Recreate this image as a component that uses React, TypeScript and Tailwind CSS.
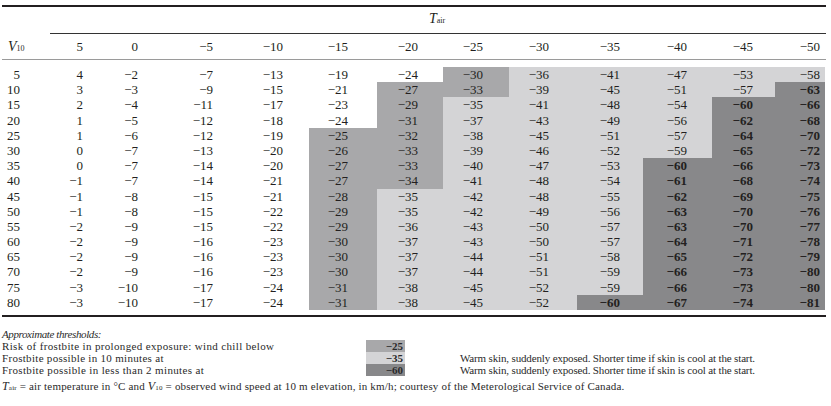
import React from "react";

const temps = [5, 0, -5, -10, -15, -20, -25, -30, -35, -40, -45, -50];

const data: [number, number[]][] = [
  [5, [4, -2, -7, -13, -19, -24, -30, -36, -41, -47, -53, -58]],
  [10, [3, -3, -9, -15, -21, -27, -33, -39, -45, -51, -57, -63]],
  [15, [2, -4, -11, -17, -23, -29, -35, -41, -48, -54, -60, -66]],
  [20, [1, -5, -12, -18, -24, -31, -37, -43, -49, -56, -62, -68]],
  [25, [1, -6, -12, -19, -25, -32, -38, -45, -51, -57, -64, -70]],
  [30, [0, -7, -13, -20, -26, -33, -39, -46, -52, -59, -65, -72]],
  [35, [0, -7, -14, -20, -27, -33, -40, -47, -53, -60, -66, -73]],
  [40, [-1, -7, -14, -21, -27, -34, -41, -48, -54, -61, -68, -74]],
  [45, [-1, -8, -15, -21, -28, -35, -42, -48, -55, -62, -69, -75]],
  [50, [-1, -8, -15, -22, -29, -35, -42, -49, -56, -63, -70, -76]],
  [55, [-2, -9, -15, -22, -29, -36, -43, -50, -57, -63, -70, -77]],
  [60, [-2, -9, -16, -23, -30, -37, -43, -50, -57, -64, -71, -78]],
  [65, [-2, -9, -16, -23, -30, -37, -44, -51, -58, -65, -72, -79]],
  [70, [-2, -9, -16, -23, -30, -37, -44, -51, -59, -66, -73, -80]],
  [75, [-3, -10, -17, -24, -31, -38, -45, -52, -59, -66, -73, -80]],
  [80, [-3, -10, -17, -24, -31, -38, -45, -52, -60, -67, -74, -81]],
];

// column widths + right padding, one per temperature column
const colCls = [
  "w-[57px] pr-[24px]",
  "w-[55px] pr-[24px]",
  "w-[78px] pr-[27px]",
  "w-[69px] pr-[26px]",
  "w-[68px] pr-[29px]",
  "w-[66px] pr-[25px]",
  "w-[66px] pr-[26px]",
  "w-[68px] pr-[28px]",
  "w-[66px] pr-[23px]",
  "w-[69px] pr-[25px]",
  "w-[63px] pr-[22px]",
  "w-[50px] pr-[5px]",
];

const fmt = (n: number) => (n < 0 ? "\u2212" + Math.abs(n) : String(n));

function shade(v: number) {
  if (v <= -60) return "bg-[#88888a] font-bold";
  if (v <= -35) return "bg-[#d4d4d6]";
  if (v <= -25) return "bg-[#a8a8aa]";
  return "";
}

export default function App() {
  return (
    <div className="w-[831px] h-[406px] bg-white text-[#231f20] font-['Liberation_Serif',serif]">
      <div className="ml-[2px] w-[824px] pt-[5px]">
        <div className="border-t-2 border-[#231f20]" />

        {/* T air header */}
        <div className="flex h-[27px] items-end">
          <div className="w-[48px]" />
          <div className="flex-1 border-b border-[#333] pb-[5px] pl-[379px] text-[14px] leading-[14px]">
            <i>T</i>
            <span className="text-[8px]">air</span>
          </div>
        </div>

        {/* column headings */}
        <div className="flex h-[26px] items-center text-[13px] border-b-[1.5px] border-[#9a9a9a]">
          <div className="w-[48px] pl-[6px]">
            <i className="text-[14px]">V</i>
            <span className="text-[8px]">10</span>
          </div>
          {temps.map((t, i) => (
            <div key={t} className={`${colCls[i]} text-right`}>
              {fmt(t)}
            </div>
          ))}
        </div>

        {/* data rows */}
        <div className="pt-[7px] pb-[5px] border-b-2 border-[#231f20]">
          {data.map(([v, vals]) => (
            <div key={v} className="flex h-[15.2px] text-[13px] leading-[15.2px]">
              <div className="w-[48px] pr-[30px] text-right">{v}</div>
              {vals.map((x, i) => (
                <div key={i} className={`${colCls[i]} ${shade(x)} text-right`}>
                  {fmt(x)}
                </div>
              ))}
            </div>
          ))}
        </div>

        {/* legend */}
        <div className="pt-[11px] text-[11px] leading-[12px] text-[#2a2a2a]">
          <div className="italic tracking-[-0.4px]">Approximate thresholds:</div>
          <div className="flex h-[12px]">
            <div className="w-[364px] tracking-[0.35px]">Risk of frostbite in prolonged exposure: wind chill below</div>
            <div className="flex w-[39px] items-center justify-end bg-[#a8a8aa] pr-[2px] font-bold text-[11px] leading-[11px]">{"\u2212"}25</div>
          </div>
          <div className="flex h-[12px]">
            <div className="w-[364px] tracking-[0.3px]">Frostbite possible in 10 minutes at</div>
            <div className="flex w-[39px] items-center justify-end bg-[#d4d4d6] pr-[2px] font-bold text-[11px] leading-[11px]">{"\u2212"}35</div>
            <div className="pl-[55px] tracking-[-0.15px]">Warm skin, suddenly exposed. Shorter time if skin is cool at the start.</div>
          </div>
          <div className="flex h-[12px]">
            <div className="w-[364px] tracking-[0.35px]">Frostbite possible in less than 2 minutes at</div>
            <div className="flex w-[39px] items-center justify-end bg-[#88888a] pr-[2px] font-bold text-[11px] leading-[11px]">{"\u2212"}60</div>
            <div className="pl-[55px] tracking-[-0.15px]">Warm skin, suddenly exposed. Shorter time if skin is cool at the start.</div>
          </div>
          <div className="pt-[4px] tracking-[0.18px]">
            <i className="text-[12px]">T</i>
            <span className="text-[7px]">air</span> = air temperature in °C and <i className="text-[12px]">V</i>
            <span className="text-[7px]">10</span> = observed wind speed at 10 m elevation, in km/h; courtesy of the
            Meterological Service of Canada.
          </div>
        </div>
      </div>
    </div>
  );
}
